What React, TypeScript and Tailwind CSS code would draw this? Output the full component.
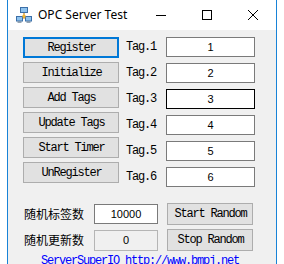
import React from 'react';

const mono = { fontFamily: '"Liberation Mono", "Noto Sans CJK SC", monospace' };

const buttons = ['Register', 'Initialize', 'Add Tags', 'Update Tags', 'Start Timer', 'UnRegister'];
const tags = ['1', '2', '3', '4', '5', '6'];

function NetIcon() {
  return (
    <svg width="16" height="16" viewBox="0 0 16 16">
      <path d="M8 5 V9 M3 11 H13 M8 9 V11" stroke="#d08a10" strokeWidth="1.2" fill="none" />
      <rect x="4.5" y="0.5" width="7" height="5" fill="#8fc3ee" stroke="#3b6fa8" />
      <rect x="0.5" y="9.5" width="6" height="4.5" fill="#8fc3ee" stroke="#3b6fa8" />
      <rect x="9.5" y="9.5" width="6" height="4.5" fill="#8fc3ee" stroke="#3b6fa8" />
      <rect x="6.5" y="8" width="3" height="2.5" fill="#f2b630" />
      <rect x="1.5" y="14.5" width="4" height="1.2" fill="#6c7f92" />
      <rect x="10.5" y="14.5" width="4" height="1.2" fill="#6c7f92" />
    </svg>
  );
}

function WinButton({ label, focused }: { label: string; focused?: boolean }) {
  return (
    <div
      className={`flex h-[21px] w-[96px] items-center justify-center bg-[#e1e1e1] pl-[1px] text-[12px] tracking-[-1.2px] text-black ${
        focused ? 'border-2 border-[#0078d7]' : 'border border-[#adadad]'
      }`}
      style={mono}
    >
      {label}
    </div>
  );
}

export default function App() {
  return (
    <div className="h-[264px] w-[284px] overflow-hidden bg-white">
      <div className="ml-[7px] h-full w-[270px] border-x border-[#1883d7] bg-[#f0f0f0]">
        {/* title bar */}
        <div className="flex h-[30px] items-center bg-white">
          <div className="ml-[8px] flex h-[16px] w-[16px] items-center">
            <NetIcon />
          </div>
          <span
            className="ml-[6px] text-[12px] text-black"
            style={{ fontFamily: '"Noto Sans", "Liberation Sans", sans-serif' }}
          >
            OPC Server Test
          </span>
          <div className="ml-auto flex h-full">
            <div className="flex h-full w-[46px] items-center justify-center">
              <div className="h-px w-[10px] bg-black" />
            </div>
            <div className="flex h-full w-[46px] items-center justify-center">
              <div className="h-[10px] w-[10px] border border-black" />
            </div>
            <div className="flex h-full w-[46px] items-center justify-center">
              <svg width="10" height="10" viewBox="0 0 10 10">
                <path d="M0 0 L10 10 M10 0 L0 10" stroke="#000" strokeWidth="1" />
              </svg>
            </div>
          </div>
        </div>

        {/* tag rows */}
        <div className="flex pl-[15px] pt-[7px]">
          <div className="flex flex-col gap-[4px]">
            {buttons.map((b, i) => (
              <WinButton key={b} label={b} focused={i === 0} />
            ))}
          </div>
          <div className="ml-[7px] flex flex-col gap-[6px]">
            {tags.map((t, i) => (
              <div key={t} className="flex h-[20px] items-center">
                <span className="w-[40px] text-[12px] tracking-[-1.2px] text-black" style={mono}>
                  Tag.{t}
                </span>
                <div
                  className={`flex h-[20px] w-[89px] items-center justify-center bg-white text-[11px] text-black ${
                    i === 2 ? 'border border-black' : 'border border-[#7a7a7a]'
                  }`}
                  style={{ fontFamily: '"Liberation Sans", sans-serif' }}
                >
                  {t}
                </div>
              </div>
            ))}
          </div>
        </div>

        {/* random section */}
        <div className="mt-[16px] flex flex-col gap-[4px] pl-[16px]">
          <div className="flex h-[22px] items-center">
            <span
              className="w-[70px] text-[12px] text-black"
              style={{ fontFamily: '"Noto Sans CJK SC", sans-serif' }}
            >
              随机标签数
            </span>
            <div
              className="flex h-[20px] w-[64px] items-center justify-center border border-[#7a7a7a] bg-white text-[11px] text-black"
              style={{ fontFamily: '"Liberation Sans", sans-serif' }}
            >
              10000
            </div>
            <div
              className="ml-[9px] flex h-[22px] w-[86px] items-center justify-center border border-[#adadad] bg-[#e1e1e1] pl-[1px] text-[12px] tracking-[-1.2px] text-black"
              style={mono}
            >
              Start Random
            </div>
          </div>
          <div className="flex h-[22px] items-center">
            <span
              className="w-[70px] text-[12px] text-black"
              style={{ fontFamily: '"Noto Sans CJK SC", sans-serif' }}
            >
              随机更新数
            </span>
            <div
              className="flex h-[21px] w-[64px] items-center justify-center border border-[#b5b5b5] bg-[#f0f0f0] text-[11px] text-black"
              style={{ fontFamily: '"Liberation Sans", sans-serif' }}
            >
              0
            </div>
            <div
              className="ml-[9px] flex h-[22px] w-[86px] items-center justify-center border border-[#adadad] bg-[#e1e1e1] pl-[1px] text-[12px] tracking-[-1.2px] text-black"
              style={mono}
            >
              Stop Random
            </div>
          </div>
        </div>

        <div
          className="mt-[3px] pl-[33px] text-[12px] leading-[14px] tracking-[-1.2px] text-[#0000ff]"
          style={mono}
        >
          ServerSuperIO http://www.bmpj.net
        </div>
      </div>
    </div>
  );
}
